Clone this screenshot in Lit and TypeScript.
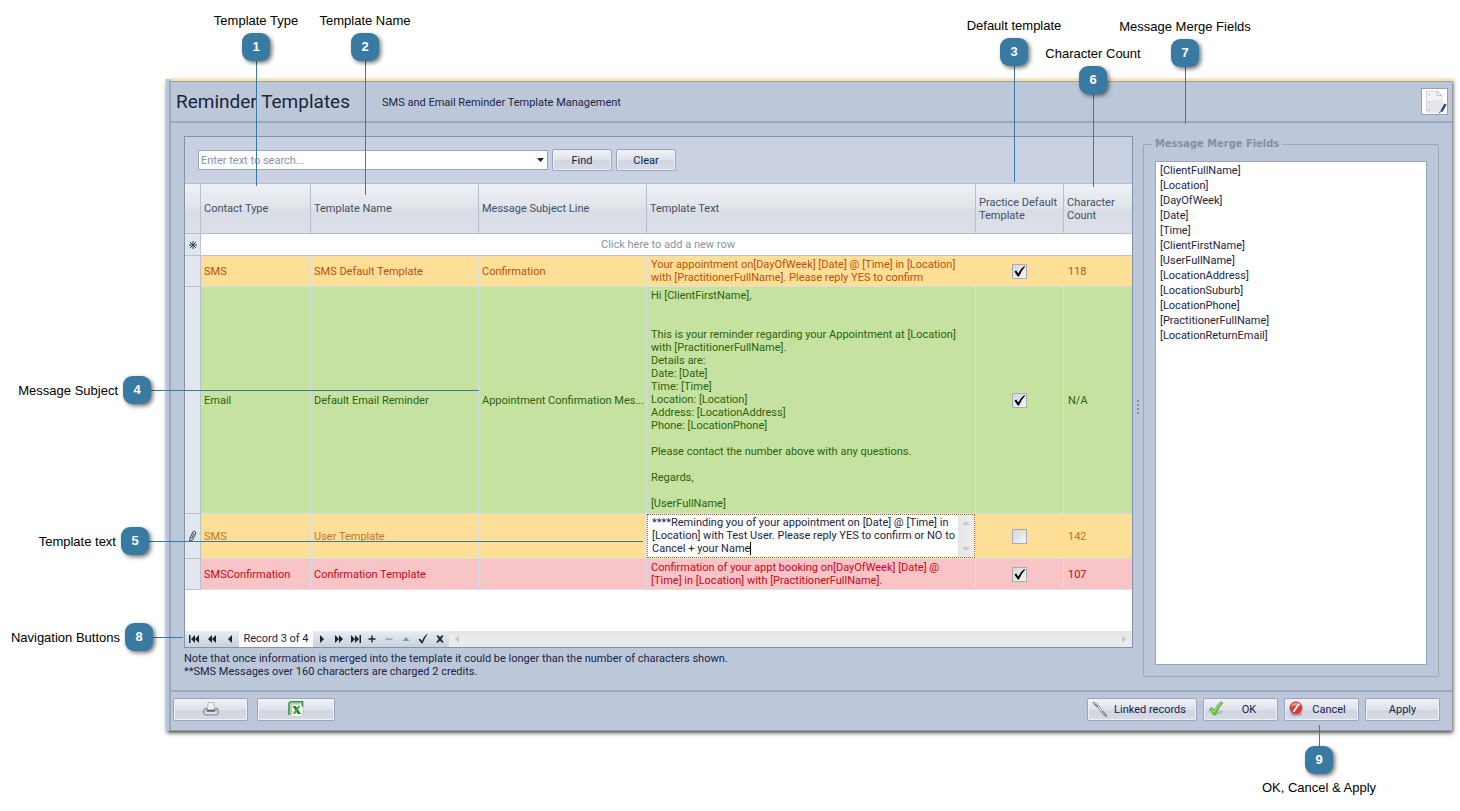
import { LitElement, html, css, svg, nothing } from "lit";
import { customElement, property } from "lit/decorators.js";
import { classMap } from "lit/directives/class-map.js";
import { styleMap } from "lit/directives/style-map.js";

type Side = "top" | "left" | "bottom";

interface Callout {
  n: number;
  label: string;
  x: number;
  y: number;
  side: Side;
  reach: number;
}

const CALLOUTS: Callout[] = [
  { n: 1, label: "Template Type", x: 256, y: 47, side: "top", reach: 139 },
  { n: 2, label: "Template Name", x: 365, y: 47, side: "top", reach: 148 },
  { n: 3, label: "Default template", x: 1014, y: 52, side: "top", reach: 130 },
  { n: 4, label: "Message Subject", x: 137, y: 390, side: "left", reach: 342 },
  { n: 5, label: "Template text", x: 135, y: 541, side: "left", reach: 508 },
  { n: 6, label: "Character Count", x: 1093, y: 80, side: "top", reach: 107 },
  { n: 7, label: "Message Merge Fields", x: 1185, y: 53, side: "top", reach: 71 },
  { n: 8, label: "Navigation Buttons", x: 139, y: 637, side: "left", reach: 44 },
  { n: 9, label: "OK, Cancel & Apply", x: 1319, y: 760, side: "bottom", reach: 35 },
];

interface Row {
  tone: string;
  type: string;
  name: string;
  subject: string;
  text: string;
  isDefault: boolean;
  count: string;
  editing?: boolean;
}

const ROWS: Row[] = [
  {
    tone: "sms",
    type: "SMS",
    name: "SMS Default Template",
    subject: "Confirmation",
    text: "Your appointment on[DayOfWeek] [Date] @ [Time] in [Location]\nwith [PractitionerFullName]. Please reply YES to confirm",
    isDefault: true,
    count: "118",
  },
  {
    tone: "email",
    type: "Email",
    name: "Default Email Reminder",
    subject: "Appointment Confirmation Mes...",
    text: "Hi [ClientFirstName],\n\n\nThis is your reminder regarding your Appointment at [Location]\nwith [PractitionerFullName].\nDetails are:\nDate: [Date]\nTime: [Time]\nLocation: [Location]\nAddress: [LocationAddress]\nPhone: [LocationPhone]\n\nPlease contact the number above with any questions.\n\nRegards,\n\n[UserFullName]",
    isDefault: true,
    count: "N/A",
  },
  {
    tone: "sms",
    type: "SMS",
    name: "User Template",
    subject: "",
    text: "****Reminding you of your appointment on [Date] @ [Time] in\n[Location] with Test User. Please reply YES to confirm or NO to\nCancel + your Name",
    isDefault: false,
    count: "142",
    editing: true,
  },
  {
    tone: "confirm",
    type: "SMSConfirmation",
    name: "Confirmation Template",
    subject: "",
    text: "Confirmation of your appt booking on[DayOfWeek] [Date] @\n[Time] in [Location] with [PractitionerFullName].",
    isDefault: true,
    count: "107",
  },
];

const FIELDS = [
  "ClientFullName", "Location", "DayOfWeek", "Date", "Time", "ClientFirstName",
  "UserFullName", "LocationAddress", "LocationSuburb", "LocationPhone",
  "PractitionerFullName", "LocationReturnEmail",
];

const NAV_BEFORE = [
  { label: "First record", d: "M4 4h1.5v8H4zM10 4v8L6 8zM14 4v8L10 8z" },
  { label: "Previous page", d: "M9 4v8L5 8zM13 4v8L9 8z" },
  { label: "Previous record", d: "M11 4v8L7 8z" },
];

const NAV_AFTER = [
  { label: "Next record", d: "M7 4v8l4-4z" },
  { label: "Next page", d: "M5 4v8l4-4zM9 4v8l4-4z" },
  { label: "Last record", d: "M4 4v8l4-4zM8 4v8l4-4zM12.500 4h1.500v8h-1.500z" },
  { label: "Append record", d: "M7.300 4.500h1.400v2.800h2.800v1.400H8.700v2.800H7.300V8.700H4.500V7.300h2.800z" },
  { label: "Delete record", d: "M4.500 7.500h7v1.200h-7z", off: true },
  { label: "Edit record", d: "M4.500 10h7L8 6.300z", off: true },
  { label: "End edit", d: "M3.500 8.500l1.500-.8 2 2.300Q8.500 5.500 12 3l.5.600Q9.500 7 7.500 12.500h-.8z" },
  { label: "Cancel edit", d: "M4.300 4.500h2.200L8 6.500l1.500-2h2.200L9.300 8l2.600 3.600H9.600L8 9.500l-1.600 2.100H4.100L6.700 8z" },
];

const UI_FONT = css`Roboto, "DejaVu Sans Condensed", sans-serif`;

@customElement("help-callout")
export class HelpCallout extends LitElement {
  @property({ type: Number }) n = 0;
  @property() label = "";
  @property() side: Side = "top";
  @property({ type: Number }) reach = 0;

  static styles = css`
    :host {
      position: absolute;
      width: 0;
      height: 0;
      font: 13px/16px "Liberation Sans", Arial, sans-serif;
      color: #000;
    }
    .badge,
    .label,
    .line {
      position: absolute;
    }
    .badge {
      left: -14px;
      top: -14px;
      width: 28px;
      height: 28px;
      border-radius: 9px;
      background: #387aa2;
      box-shadow: 2px 2px 4px rgba(0, 0, 0, 0.55);
      color: #fff;
      font-weight: 700;
      line-height: 28px;
      text-align: center;
    }
    .label {
      white-space: nowrap;
    }
    .top .label,
    .bottom .label {
      left: -100px;
      width: 200px;
      text-align: center;
    }
    .top .label {
      bottom: 18px;
    }
    .bottom .label {
      top: 20px;
    }
    .left .label {
      right: 19px;
      top: -7px;
    }
    .line {
      left: 0;
      top: 0;
      background: #387aa2;
    }
    .bottom .line {
      top: auto;
      bottom: 0;
    }
  `;

  render() {
    const along = this.side === "left" ? "width" : "height";
    const across = this.side === "left" ? "height" : "width";
    return html`<div class=${this.side}>
      <div class="line" style=${styleMap({ [along]: this.reach + "px", [across]: "1px" })}></div>
      <div class="badge">${this.n}</div>
      <div class="label">${this.label}</div>
    </div>`;
  }
}

@customElement("template-grid")
export class TemplateGrid extends LitElement {
  static styles = css`
    :host {
      display: flex;
      flex-direction: column;
      min-width: 0;
      border: 1px solid #8593aa;
      background: #fff;
      font: 11px/13px ${UI_FONT};
    }
    .search {
      display: flex;
      align-items: center;
      gap: 4px;
      padding: 12px 13px;
      background: #c9d1e2;
    }
    .combo {
      display: flex;
      box-sizing: border-box;
      width: 350px;
      height: 20px;
      border: 1px solid #98a5bb;
      background: #fff;
    }
    .combo input {
      flex: 1;
      min-width: 0;
      border: 0;
      padding: 0 2px;
      background: none;
      font: inherit;
      outline: none;
    }
    .combo input::placeholder {
      color: #8791b0;
    }
    .combo button {
      width: 14px;
      padding: 0;
      border: 0;
      background: none;
    }
    .combo svg {
      display: block;
      margin: auto;
    }
    .btn {
      box-sizing: border-box;
      width: 60px;
      height: 22px;
      padding: 0;
      border: 1px solid #9aa6bd;
      border-radius: 2px;
      background: linear-gradient(#f1f3f6, #dde1ea 50%, #cfd5e1 51%, #d6dbe6);
      box-shadow: inset 0 0 0 1px #eef0f5;
      color: #15224c;
      font: inherit;
    }
    table {
      width: 100%;
      table-layout: fixed;
      border-collapse: separate;
      border-spacing: 0;
    }
    .c-mark { width: 16px; }
    .c-type { width: 110px; }
    .c-name { width: 168px; }
    .c-default { width: 88px; }
    .c-count { width: 68px; }
    th {
      box-sizing: border-box;
      height: 51px;
      padding: 0 3px;
      border: solid #b5bfd0;
      border-width: 1px 1px 1px 0;
      background: linear-gradient(#eef1f4, #dfe4ea 50%, #d9dee6 52%, #dadfe8);
      color: #444f68;
      font-weight: 400;
      text-align: left;
    }
    td {
      padding: 2px 0 2px 3px;
      border: solid #d9dde6;
      border-width: 0 1px 1px 0;
      overflow: hidden;
      text-overflow: ellipsis;
      white-space: nowrap;
      vertical-align: middle;
    }
    th:last-child,
    td:last-child {
      border-right: 0;
    }
    .mark {
      padding: 0;
      border-color: #b9c1d3;
      background: #e2e6ef;
      text-align: center;
    }
    .mark svg {
      display: block;
      margin: auto;
    }
    .new td {
      height: 17px;
      border-color: #b9c1d3;
      color: #8791a8;
      text-align: center;
    }
    .text,
    .count {
      padding-left: 4px;
    }
    .text {
      white-space: pre;
    }
    .sms td:not(.mark) { background: #fedf98; color: #bb500a; }
    .sms.editing td:not(.mark) { color: #c6741f; }
    .email td:not(.mark) { background: #c5e2a0; color: #2d620c; }
    .email .text { padding-bottom: 3px; }
    .confirm td:not(.mark) { background: #f8c4c5; color: #cf0519; }
    .check {
      padding: 0;
      text-align: center;
    }
    .check input {
      appearance: none;
      display: block;
      width: 15px;
      height: 15px;
      margin: 0 auto;
      border: 1px solid #a9abb0;
      background: linear-gradient(135deg, #d3d6dc, #f4f4f4);
    }
    .check input:checked {
      background:
        url("data:image/svg+xml,%3Csvg xmlns='http://www.w3.org/2000/svg' viewBox='0 0 13 13'%3E%3Cpath d='M1.500 6.500 3.200 5.600 5.200 8.400Q7.200 4 11.300 1L12 1.800Q8.400 5.600 6 11.500H4.700Z' fill='%23000'/%3E%3C/svg%3E"),
        linear-gradient(135deg, #d3d6dc, #f4f4f4);
    }
    .editing .text {
      padding: 0;
    }
    .editor {
      position: relative;
      display: flex;
      box-sizing: border-box;
      height: 44px;
      border: 1px dotted #b4651a;
      background: #fff;
    }
    .editor textarea {
      flex: 1;
      min-width: 0;
      padding: 1px 0 0 4px;
      border: 0;
      outline: none;
      resize: none;
      overflow: hidden;
      background: none;
      color: #1b2445;
      font: inherit;
      white-space: pre;
    }
    .caret {
      position: absolute;
      left: 102px;
      top: 27px;
      width: 1px;
      height: 13px;
      background: #000;
    }
    .vbar {
      display: flex;
      flex-direction: column;
      justify-content: space-between;
      align-items: center;
      width: 16px;
      padding: 6px 0;
      background: linear-gradient(90deg, #e4e5e8, #efeff0);
      box-sizing: border-box;
    }
    .space {
      flex: 1;
    }
    .nav {
      display: flex;
      align-items: stretch;
      height: 16px;
    }
    .nav button {
      width: 17px;
      padding: 0;
      border: 0;
      background: linear-gradient(#e9ecf2, #c9d0de);
      color: #1c2338;
    }
    .nav button:disabled {
      color: #8b909c;
    }
    .nav button svg {
      display: block;
      fill: currentColor;
    }
    .first button {
      width: 18px;
    }
    .group {
      display: flex;
    }
    .record {
      width: 74px;
      line-height: 16px;
      text-align: center;
      white-space: nowrap;
      color: #1b2445;
    }
    .hbar {
      flex: 1;
      display: flex;
      align-items: center;
      justify-content: space-between;
      padding: 0 6px;
      background: linear-gradient(#dfe1e4, #e8eaec 30%);
    }
  `;

  private navButton = (b: { label: string; d: string; off?: boolean }) => html`
    <button aria-label=${b.label} ?disabled=${b.off}>
      <svg width="16" height="16" viewBox="0 0 16 16"><path d=${b.d} /></svg>
    </button>`;

  private row = (r: Row) => html`
    <tr class=${classMap({ [r.tone]: true, editing: !!r.editing })}>
      <td class="mark">${r.editing
        ? html`<svg width="9" height="13" viewBox="0 0 9 13" fill="none" stroke="#3a4155">
            <path d="M1.500 11.500 2 8 5 1.700Q6.500.500 7.700 2L7.500 4 4.500 10ZM3.500 8.500 6 3.200" />
          </svg>`
        : nothing}</td>
      <td>${r.type}</td>
      <td>${r.name}</td>
      <td>${r.subject}</td>
      <td class="text">${r.editing
        ? html`<div class="editor">
            <textarea aria-label="Template text" .value=${r.text}></textarea>
            <span class="caret"></span>
            <span class="vbar">
              <svg width="8" height="4"><path d="M0 4h8L4 0z" fill="#c6c8cc" /></svg>
              <svg width="8" height="4"><path d="M0 0h8L4 4z" fill="#c6c8cc" /></svg>
            </span>
          </div>`
        : r.text}</td>
      <td class="check"><input type="checkbox" aria-label="Practice default template" .checked=${r.isDefault} /></td>
      <td class="count">${r.count}</td>
    </tr>`;

  render() {
    return html`
      <div class="search">
        <div class="combo">
          <input type="text" aria-label="Search templates" placeholder="Enter text to search..." />
          <button aria-label="Show search history">
            <svg width="7" height="4"><path d="M0 0h7L3.500 4z" fill="#15224c" /></svg>
          </button>
        </div>
        <button class="btn">Find</button>
        <button class="btn">Clear</button>
      </div>
      <table>
        <colgroup>
          <col class="c-mark" /><col class="c-type" /><col class="c-name" /><col class="c-name" />
          <col /><col class="c-default" /><col class="c-count" />
        </colgroup>
        <thead>
          <tr>
            <th></th><th>Contact Type</th><th>Template Name</th><th>Message Subject Line</th>
            <th>Template Text</th><th>Practice Default<br />Template</th><th>Character<br />Count</th>
          </tr>
        </thead>
        <tbody>
          <tr class="new">
            <td class="mark"><svg width="8" height="8" viewBox="0 0 8 8" stroke="#333b50">
              <path d="M4 0v8M0 4h8M1 1l6 6M7 1 1 7" />
            </svg></td>
            <td colspan="6">Click here to add a new row</td>
          </tr>
          ${ROWS.map(this.row)}
        </tbody>
      </table>
      <div class="space"></div>
      <div class="nav">
        <div class="group first">${NAV_BEFORE.map(this.navButton)}</div>
        <span class="record">Record 3 of 4</span>
        <div class="group">${NAV_AFTER.map(this.navButton)}</div>
        <div class="hbar">
          <svg width="4" height="8"><path d="M4 0v8L0 4z" fill="#c6c8cc" /></svg>
          <svg width="4" height="8"><path d="M0 0v8l4-4z" fill="#c6c8cc" /></svg>
        </div>
      </div>`;
  }
}

const printerIcon = svg`<svg width="16" height="14" viewBox="0 0 16 14">
  <path d="M5 .500h6l.500 7h-7z" fill="#eeeff1" stroke="#b9bbc0" />
  <path d="M1.500 6.500h2.500l.500 2.500h7l.500-2.500h2.500l1 3v2l-1.500 1.500h-12L.500 11.500v-2z" fill="#c3c6ca" stroke="#85888e" />
  <path d="M4 8h8v1.500H4z" fill="#595c62" /><path d="M2.500 11h11" stroke="#fafafa" />
</svg>`;

const excelIcon = svg`<svg width="16" height="16" viewBox="0 0 16 16">
  <path d="M3.500 2.500h11.500V13l-2.500 2.500h-9z" fill="#f6fbf4" stroke="#b6c9b4" stroke-width=".7" />
  <path d="M1 14V3.500Q1 .800 3.700.800H14.500v5" fill="none" stroke="#2e8f3a" stroke-width="1.500" />
  <path d="M3 13V4.500Q3 3 4.500 3H12" fill="none" stroke="#8cc48d" />
  <path d="M4.500 5h3.300l5.200 8H9.700z" fill="#1f8529" />
  <path d="M12.500 5h-2.300l-5.500 8h2.300z" fill="#3fa045" />
</svg>`;

const chainIcon = svg`<svg width="16" height="17" viewBox="0 0 16 17" fill="none" stroke="#8a8d94">
  <path d="M1 1Q5 1.500 6 5.500Q2 5.500 1 1Z" fill="#e3e4e8" />
  <path d="M5 5.500 6.500 4.500 11 10 9.500 11.500Z" fill="#f5f5f7" />
  <path d="M10 10Q14.500 11.500 15 16Q10.500 15 10 10Z" fill="#d5d7dc" />
  <path d="M3 3l3 3.200M11.500 12l2.200 2.500" stroke="#6d7078" />
</svg>`;

const okIcon = svg`<svg width="17" height="16" viewBox="0 0 17 16">
  <path d="M7 13.500Q12 14.500 15.500 10Q13 9 9 11z" fill="#9ba3b2" opacity=".6" />
  <path d="M1 8.500 4 6.500 6.300 9.300Q9 3.500 13 .800L14.800 1.800Q10.500 6.500 7.500 14H5.500Q3.800 10.500 1 8.500z" fill="#72bf3e" stroke="#5fa53a" stroke-width=".8" />
  <path d="M3 8.200 6 11Q9 5 13 2" stroke="#b5e48c" fill="none" />
</svg>`;

const cancelIcon = svg`<svg width="15" height="16" viewBox="0 0 15 16">
  <ellipse cx="7.500" cy="13" rx="6" ry="2.300" fill="#8d95a5" opacity=".6" />
  <circle cx="7" cy="7" r="6.200" fill="#dc3a38" stroke="#c94a4a" stroke-width=".7" />
  <path d="M2 5.500Q3.500 1.300 8 1.800Q11 2 12 5Q7 4 2 5.500z" fill="#f2908a" />
  <path d="M4.500 10.800 9.800 3" stroke="#fff" stroke-width="1.900" />
</svg>`;

const notepadIcon = svg`<svg width="24" height="24" viewBox="0 0 24 24">
  <path d="M3.500 1h11l4.500 4.500V22h-15.500z" fill="#f4f4f6" stroke="#d5d6da" />
  <path d="M4 21.500V14Q9 9 18.500 9v12.500z" fill="#e6e7ea" />
  <path d="M14 1v4.500h4.500z" fill="#fff" stroke="#c2c4ca" />
  <path d="M5.500 4.500h1.500M5.500 12h1.500M5.500 20h1.500" stroke="#b5b8c0" stroke-width="1.500" />
  <path d="M22.500 14 18.500 21.500" stroke="#2c4a7a" stroke-width="2.600" />
  <path d="M18.500 21 16 23" stroke="#666" />
</svg>`;

@customElement("app-root")
export class AppRoot extends LitElement {
  static styles = css`
    :host {
      position: relative;
      display: flex;
      flex-direction: column;
      box-sizing: border-box;
      min-height: 100vh;
      padding: 79px 8px 80px 166px;
      background: #fff;
      color: #1b2445;
      font: 11px/13px ${UI_FONT};
    }
    .window {
      flex: 1;
      display: flex;
      flex-direction: column;
      border-left: 3px solid #b9c6da;
      background: #bcc8d9;
      box-shadow: 1px 2px 4px rgba(0, 0, 0, 0.7);
    }
    .frame {
      flex: 1;
      display: flex;
      flex-direction: column;
      border-top: 2px solid #ffe39a;
      border-left: 2px solid #9ba8be;
      border-bottom: 1px solid #8c99af;
    }
    header {
      display: flex;
      align-items: center;
      box-sizing: border-box;
      height: 42px;
      padding: 0 4px 0 5px;
      gap: 32px;
      border-top: 1px solid #93a0b7;
      border-bottom: 2px solid #9ba8be;
    }
    h1 {
      margin: 0;
      font-size: 19px;
      line-height: 24px;
      font-weight: 400;
      color: #1b263b;
    }
    header p {
      flex: 1;
      margin: 0;
      padding-top: 2px;
    }
    .pad {
      display: grid;
      place-items: center;
      box-sizing: border-box;
      width: 27px;
      height: 27px;
      padding: 0;
      border: 1px solid #93a0b7;
      background: #fff;
    }
    main {
      flex: 1;
      display: flex;
      padding: 13px 13px 12px;
    }
    .left {
      flex: 1;
      min-width: 0;
      display: flex;
      flex-direction: column;
      gap: 4px;
    }
    template-grid {
      flex: 1;
    }
    .note {
      margin: 0;
    }
    .splitter {
      display: flex;
      flex-direction: column;
      align-items: center;
      justify-content: center;
      gap: 2px;
      width: 10px;
    }
    .splitter i {
      width: 2px;
      height: 2px;
      background: #8290a8;
    }
    fieldset {
      display: flex;
      flex-direction: column;
      box-sizing: border-box;
      width: 296px;
      margin: 0 0 1px;
      padding: 9px 11px 11px;
      border: 1px solid #9ba8be;
      border-radius: 2px;
    }
    legend {
      margin-left: -3px;
      padding: 0 3px;
      font: 700 11px/16px "DejaVu Sans Condensed", "DejaVu Sans", sans-serif;
      color: #8490a6;
    }
    ul {
      flex: 1;
      margin: 0;
      padding: 1px 4px;
      border: 1px solid #98a5bb;
      background: #fff;
      list-style: none;
      line-height: 15px;
    }
    footer {
      display: flex;
      align-items: center;
      gap: 6px;
      box-sizing: border-box;
      height: 40px;
      padding: 0 12px 4px 2px;
      border-top: 2px solid #9ba8be;
    }
    .tools {
      flex: 1;
      display: flex;
      gap: 9px;
    }
    footer button {
      display: flex;
      align-items: center;
      box-sizing: border-box;
      width: 75px;
      height: 23px;
      padding: 0 4px;
      border: 1px solid #9aa6bd;
      border-radius: 2px;
      background: linear-gradient(#f1f3f6, #dde1ea 50%, #cfd5e1 51%, #d6dbe6);
      box-shadow: inset 0 0 0 1px #eef0f5;
      color: #15224c;
      font: inherit;
    }
    footer button span {
      flex: 1;
      text-align: center;
    }
    .tools button {
      justify-content: center;
    }
    .excel {
      width: 78px;
    }
    footer .wide {
      width: 110px;
    }
  `;

  render() {
    return html`
      <div class="window">
        <div class="frame">
          <header>
            <h1>Reminder Templates</h1>
            <p>SMS and Email Reminder Template Management</p>
            <button class="pad" aria-label="Notes">${notepadIcon}</button>
          </header>
          <main>
            <div class="left">
              <template-grid></template-grid>
              <p class="note">
                Note that once information is merged into the template it could be longer than the number of characters shown.<br />**SMS Messages over 160 characters are charged 2 credits.
              </p>
            </div>
            <div class="splitter"><i></i><i></i><i></i><i></i></div>
            <fieldset>
              <legend>Message Merge Fields</legend>
              <ul>
                ${FIELDS.map((f) => html`<li>[${f}]</li>`)}
              </ul>
            </fieldset>
          </main>
          <footer>
            <div class="tools">
              <button aria-label="Print">${printerIcon}</button>
              <button class="excel" aria-label="Export to Excel">${excelIcon}</button>
            </div>
            <button class="wide">${chainIcon}<span>Linked records</span></button>
            <button>${okIcon}<span>OK</span></button>
            <button>${cancelIcon}<span>Cancel</span></button>
            <button><span>Apply</span></button>
          </footer>
        </div>
      </div>
      ${CALLOUTS.map(
        (c) => html`<help-callout
          style=${styleMap({ left: c.x + "px", top: c.y + "px" })}
          .n=${c.n} .label=${c.label} .side=${c.side} .reach=${c.reach}
        ></help-callout>`,
      )}`;
  }
}
